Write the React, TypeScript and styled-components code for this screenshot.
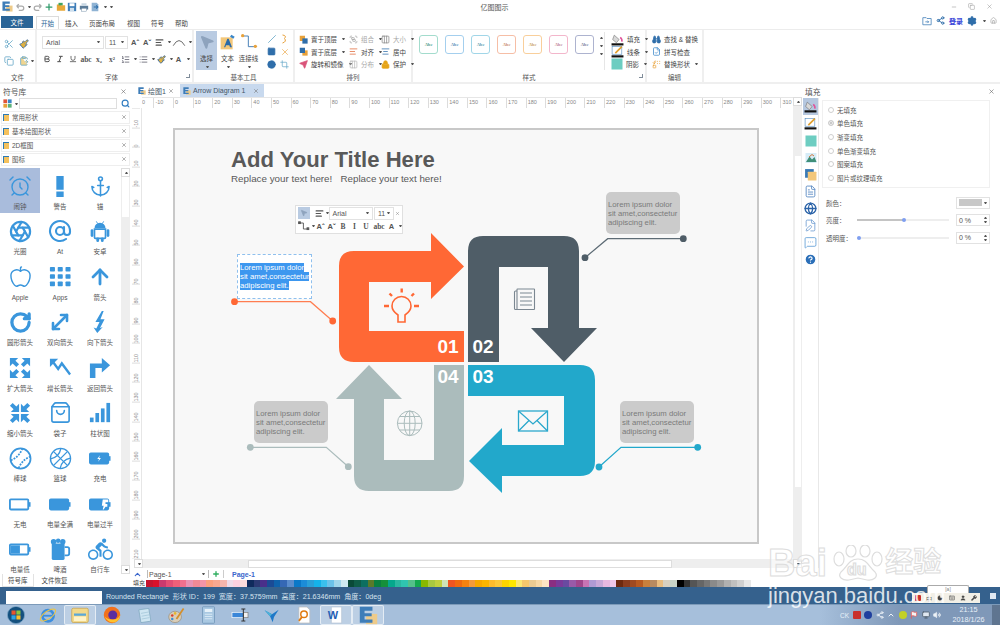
import React from 'react'
import styled, { createGlobalStyle } from 'styled-components'
import {
  AlarmClock, Anchor, Aperture, Apple, ArrowUp, AtSign, ChevronUp, ClipboardPaste, Copy, Crop, FileText,
  Paintbrush, MousePointer2, MoveDiagonal, Plus, RotateCw, Scissors, Search, Share2, Settings, ShoppingBag, X,
  Bold, Italic, Underline, AlignLeft, List, ListOrdered, Lock, Group, AlignCenter, Columns3, Minus, Send,
  HelpCircle, MessageSquareMore, FilePen, Globe, Copy as CopyIcon, Binoculars, FileCheck, Replace, Square, Circle, Home,
  Monitor, Volume2, Flag, Moon, Keyboard, User, Wrench
} from 'lucide-react'
import { MdDirectionsBike } from 'react-icons/md'

const FONT = '"Liberation Sans", "Noto Sans CJK SC", sans-serif'
const BLUE = '#3a96dc'

const GlobalStyle = createGlobalStyle`
  * { box-sizing: border-box; }
  html, body {
    margin: 0;
    width: 1000px;
    height: 625px;
    overflow: hidden;
    background: #fff;
    font-family: ${FONT};
    font-size: 6.5px;
    color: #444;
  }
  svg { display: block; flex-shrink: 0; }
`

const Shell = styled.div`
  position: relative;
  width: 1000px;
  height: 625px;
  display: flex;
  flex-direction: column;
  overflow: hidden;
`

const TitleBar = styled.div`
  height: 15px;
  flex-shrink: 0;
  display: grid;
  grid-template-columns: 1fr auto 1fr;
  align-items: center;
  padding: 0 5px 2px 2px;
`

const QuickAccess = styled.div`
  display: flex;
  align-items: center;
  gap: 1.5px;
`

const AppTitle = styled.div`
  font-size: 7px;
  color: #555;
  margin-right: 8px;
`

const WindowButtons = styled.div`
  display: flex;
  justify-content: flex-end;
  align-items: center;
  gap: 11px;
  padding-right: 2px;
  color: #888;
`

const TabRow = styled.div`
  height: 14px;
  flex-shrink: 0;
  display: flex;
  align-items: flex-end;
  padding-left: 1px;
`

const FileTab = styled.div`
  width: 32px;
  height: 12px;
  margin-bottom: 1px;
  background: #2a6496;
  color: #fff;
  display: flex;
  align-items: center;
  justify-content: center;
`

const RibbonTab = styled.div<{ $active?: boolean; $gap: number }>`
  margin-left: ${p => p.$gap}px;
  height: 13px;
  display: flex;
  align-items: center;
  padding: 0 4px;
  background: #fff;
  color: ${p => (p.$active ? '#2a6496' : '#444')};
  border: 1px solid ${p => (p.$active ? '#dcdcdc' : 'transparent')};
  border-bottom: none;
  white-space: nowrap;
`

const AccountTools = styled.div`
  flex: 1;
  height: 13px;
  display: flex;
  align-items: center;
  justify-content: flex-end;
  gap: 4px;
  padding-right: 3px;
  margin-bottom: 2px;
`

const LoginLink = styled.span`
  color: #3a46d8;
  font-weight: bold;
  font-size: 7px;
`

const Ribbon = styled.div`
  height: 55px;
  flex-shrink: 0;
  display: flex;
  border-top: 1px solid #ececec;
  border-bottom: 2px solid #efefef;
`

const RibbonGroup = styled.div<{ $width: number }>`
  width: ${p => p.$width}px;
  border-right: 2px solid #efefef;
  display: flex;
  flex-direction: column;
`

const GroupBody = styled.div`
  height: 41px;
  display: flex;
`

const GroupLabel = styled.div<{ $inset?: number }>`
  position: relative;
  flex: 1;
  display: flex;
  align-items: center;
  justify-content: center;
  padding-right: ${p => p.$inset ?? 0}px;
  color: #555;
`

const Launcher = styled.span`
  position: absolute;
  right: 2px;
  top: 3px;
  width: 4px;
  height: 4px;
  border: 1px solid #7f8c99;
  border-top-width: 0;
  border-left-width: 0;
`

const Caret = styled.span<{ $up?: boolean }>`
  display: inline-block;
  width: 3px;
  height: 2px;
  flex-shrink: 0;
  margin-left: 2px;
  border-left: 1.5px solid transparent;
  border-right: 1.5px solid transparent;
  ${p => (p.$up ? 'border-bottom: 2px solid #555;' : 'border-top: 2px solid #555;')}
`

const FileTools = styled.div`
  display: grid;
  grid-template-columns: 15px 17px;
  grid-auto-rows: 17px;
  padding: 5px 0 0 4px;
  align-items: center;
`

const InlineTool = styled.div`
  display: flex;
  align-items: center;
`

const FontTools = styled.div`
  display: flex;
  flex-direction: column;
  gap: 3px;
  padding: 5px 0 0 5px;
`

const FontRow = styled.div`
  height: 14px;
  display: flex;
  align-items: center;
`

const StyleRow = styled(FontRow)`
  margin-left: -1.5px;
`

const SelectBox = styled.div<{ $width: number }>`
  width: ${p => p.$width}px;
  height: 13px;
  border: 1px solid #e2e2e2;
  background: #fff;
  display: flex;
  align-items: center;
  justify-content: space-between;
  padding: 0 3px;
  margin-right: 1px;
  font-size: 7px;
  color: #555;
`

const GlyphButton = styled.span<{ $width?: number; $serif?: boolean }>`
  width: ${p => p.$width ?? 13}px;
  flex-shrink: 0;
  display: flex;
  align-items: center;
  justify-content: center;
  font-size: 7.5px;
  font-weight: bold;
  color: #555;
  white-space: nowrap;
  font-family: ${p => (p.$serif ? '"Liberation Serif", serif' : FONT)};
`

const BigTool = styled.div<{ $selected?: boolean; $width: number }>`
  width: ${p => p.$width}px;
  height: 39px;
  margin-top: 1px;
  padding-top: 3px;
  display: flex;
  flex-direction: column;
  align-items: center;
  white-space: nowrap;
  background: ${p => (p.$selected ? '#b9cbe2' : 'transparent')};
`

const BigLabel = styled.span`
  margin-top: 3px;
  margin-bottom: 3px;
`

const ShapeGrid = styled.div`
  display: grid;
  grid-template-columns: 13px 13px;
  grid-auto-rows: 12.5px;
  align-items: center;
  justify-items: center;
  padding: 3px 0 0 6px;
`

const ArrangeColumn = styled.div<{ $width: number }>`
  width: ${p => p.$width}px;
  flex-shrink: 0;
  display: flex;
  flex-direction: column;
  padding-top: 3px;
`

const ArrangeItem = styled.div<{ $muted?: boolean }>`
  height: 12.5px;
  display: flex;
  align-items: center;
  gap: 3px;
  white-space: nowrap;
  color: ${p => (p.$muted ? '#a8a8a8' : '#444')};
`

const StyleCards = styled.div`
  display: flex;
  gap: 7px;
  padding: 5px 0 0 6px;
`

const StyleCard = styled.div<{ $color: string; $text: string }>`
  width: 19px;
  height: 19px;
  border: 1.5px solid ${p => p.$color};
  border-radius: 3px;
  display: flex;
  align-items: center;
  justify-content: center;
  font-family: "Liberation Serif", serif;
  font-size: 4.5px;
  font-weight: bold;
  color: ${p => p.$text};
`

const StyleScroll = styled.div`
  width: 8px;
  margin-left: 3px;
  padding-top: 7px;
  display: flex;
  flex-direction: column;
  align-items: center;
  gap: 6px;
`

const StyleDivider = styled.div`
  width: 1px;
  height: 38px;
  margin: 2px 6px 0 1px;
  background: #e6e6e6;
`

const SymbolPanel = styled.div`
  width: 132px;
  display: flex;
  flex-direction: column;
`

const PanelHeader = styled.div`
  height: 14px;
  display: flex;
  align-items: center;
  justify-content: space-between;
  padding: 0 5px 0 3px;
  font-size: 7.8px;
  color: #555;
`

const SearchRow = styled.div`
  height: 11px;
  display: flex;
  align-items: center;
  padding-left: 3px;
  gap: 1px;
`

const SearchInput = styled.div`
  width: 98px;
  height: 11px;
  border: 1px solid #dedede;
  margin-right: 3px;
`

const SectionList = styled.div`
  padding-top: 1.5px;
  height: 59px;
  display: flex;
  flex-direction: column;
`

const SectionRow = styled.div`
  height: 13px;
  margin: 0 2px 1px 1px;
  border: 1px solid #eee;
  display: flex;
  align-items: center;
  gap: 3px;
  padding-left: 1px;
  color: #555;
`

const SectionClose = styled.span`
  margin-left: auto;
  margin-right: 2px;
`

const FolderMark = styled.span`
  width: 6px;
  height: 7px;
  background: #f4c15d;
  border-left: 1px solid #2d7ab5;
  border-top: 1px solid #2d7ab5;
`

const SymbolBody = styled.div`
  flex: 1;
  min-height: 0;
  display: flex;
  overflow: hidden;
`

const SymbolGrid = styled.div`
  width: 121px;
  display: grid;
  grid-template-columns: repeat(3, 40px);
  grid-auto-rows: 45.4px;
  align-content: start;
  overflow: hidden;
`

const SymbolCell = styled.div<{ $selected?: boolean }>`
  display: flex;
  flex-direction: column;
  align-items: center;
  padding-top: 6px;
  background: ${p => (p.$selected ? '#a9bcdc' : 'transparent')};
  color: ${BLUE};
`

const SymbolIcon = styled.div`
  height: 24px;
  display: flex;
  align-items: center;
`

const SymbolLabel = styled.span`
  margin-top: 5px;
  line-height: 8px;
  color: #555;
  white-space: nowrap;
`

const PanelScroll = styled.div`
  width: 9px;
  background: #eeeeee;
  display: flex;
  flex-direction: column;
  align-items: center;
`

const ScrollButton = styled.div<{ $down?: boolean }>`
  width: 9px;
  height: 9px;
  flex-shrink: 0;
  background: #fff;
  border: 1px solid #ddd;
  display: flex;
  align-items: center;
  justify-content: center;
  ${p => (p.$down ? 'margin-top: auto;' : '')}
`

const PanelThumb = styled.div`
  width: 7px;
  height: 40px;
  background: #fff;
`

const PanelTabs = styled.div`
  height: 13px;
  flex-shrink: 0;
  display: flex;
  align-items: stretch;
  padding-left: 2px;
`

const PanelTab = styled.div<{ $active?: boolean }>`
  display: flex;
  align-items: center;
  padding: 0 5px;
  margin-right: 2px;
  border: 1px solid ${p => (p.$active ? '#e2e2e2' : 'transparent')};
  border-top: none;
`

const Workspace = styled.div`
  height: 503px;
  flex-shrink: 0;
  display: flex;
`

const CenterArea = styled.div`
  flex: 1;
  display: flex;
  flex-direction: column;
`

const UpperArea = styled.div`
  height: 484px;
  display: flex;
`

const DocArea = styled.div`
  width: 670px;
  display: flex;
  flex-direction: column;
`

const DocTabs = styled.div`
  height: 13px;
  display: flex;
  align-items: stretch;
  padding-left: 3px;
`

const DocTab = styled.div<{ $active?: boolean }>`
  width: ${p => (p.$active ? 84 : 43)}px;
  margin-right: 2px;
  padding-left: 3px;
  display: flex;
  align-items: center;
  gap: 2px;
  white-space: nowrap;
  background: ${p => (p.$active ? '#c8d9ee' : '#fff')};
  font-size: 7px;
  color: #456;
`

const DocTabClose = styled.span`
  margin-left: auto;
  margin-right: 5px;
`

const DocBody = styled.div`
  flex: 1;
  display: flex;
  min-height: 0;
`

const MainColumn = styled.div`
  width: 661px;
  display: flex;
  flex-direction: column;
`

const RulerRow = styled.div`
  height: 11px;
  margin-left: 10px;
  display: flex;
  overflow: hidden;
  border-top: 1px solid #e6e6e6;
`

const RulerCell = styled.div`
  width: 19.6px;
  flex-shrink: 0;
  border-left: 1px solid #dcdcdc;
  padding-left: 1px;
  font-size: 5.5px;
  line-height: 8px;
  color: #888;
`

const RulerStart = styled(RulerCell)`
  width: 11.4px;
  border-left: none;
  padding-left: 0;
`

const CanvasRow = styled.div`
  height: 451px;
  display: flex;
`

const VerticalRuler = styled.div`
  width: 10px;
  overflow: hidden;
  border-right: 1px solid #e6e6e6;
`

const VRulerCell = styled.div`
  height: 19.6px;
  border-bottom: 1px solid #dcdcdc;
  writing-mode: vertical-rl;
  transform: rotate(180deg);
  font-size: 5.5px;
  line-height: 8px;
  color: #888;
  white-space: nowrap;
`

const Canvas = styled.div`
  flex: 1;
  padding: 20px 0 0 31px;
  background: #fff;
`

const DiagramPage = styled.div`
  position: relative;
  width: 586px;
  height: 416px;
  border: 2px solid #c8c8c8;
  background: #f8f8f8;
`

const DiagramSvg = styled.svg`
  position: absolute;
  left: 0;
  top: 0;
`

const SlideTitle = styled.div`
  position: absolute;
  left: 56px;
  top: 17px;
  font-size: 22.1px;
  line-height: 26px;
  font-weight: bold;
  color: #595959;
  white-space: nowrap;
`

const SlideSubtitle = styled.div`
  position: absolute;
  left: 56px;
  top: 43px;
  font-size: 9.8px;
  line-height: 12px;
  color: #595959;
  white-space: pre;
`

const Callout = styled.div<{ $x: number; $y: number }>`
  position: absolute;
  left: ${p => p.$x - 175}px;
  top: ${p => p.$y - 130}px;
  width: 74px;
  height: 42px;
  padding: 8px 0 0 2px;
  border-radius: 5px;
  background: #cbcbcb;
  font-size: 7.75px;
  line-height: 9px;
  color: #7a7a7a;
  white-space: pre;
`

const SelectedBox = styled.div`
  position: absolute;
  left: 62px;
  top: 124px;
  width: 75px;
  height: 45px;
  padding: 8px 0 0 2px;
  border: 1px dashed #8fc0ee;
  background: #fff;
  font-size: 7.75px;
  line-height: 9px;
  color: #fff;
  white-space: pre;
`

const SelectedLine = styled.span`
  background: #3d97ef;
`

const MiniToolbar = styled.div`
  position: absolute;
  left: 120px;
  top: 75px;
  width: 108px;
  height: 29px;
  background: #fff;
  border: 1px solid #e0e0e0;
  padding: 1px 2px;
  display: flex;
  flex-direction: column;
  gap: 1px;
`

const MiniRow = styled.div`
  height: 12.5px;
  display: flex;
  align-items: center;
`

const MiniPointer = styled.div`
  width: 12px;
  height: 12px;
  background: #b9cbe2;
  display: flex;
  align-items: center;
  justify-content: center;
  margin-right: 5px;
`

const VScroll = styled.div`
  width: 9px;
  background: #eeeeee;
  display: flex;
  flex-direction: column;
  align-items: center;
`

const VScrollThumb = styled.div`
  width: 6px;
  height: 331px;
  margin-top: 50px;
  background: #fff;
`

const HScroll = styled.div`
  height: 9px;
  margin-left: 2px;
  background: #eeeeee;
  display: flex;
  align-items: center;
`

const HScrollThumb = styled.div`
  width: 424px;
  height: 8px;
  margin-left: 105px;
  background: #fff;
  border: 1px solid #ddd;
`

const RightPanel = styled.div`
  width: 198px;
  display: flex;
  flex-direction: column;
`

const RightBody = styled.div`
  flex: 1;
  display: flex;
`

const ToolStrip = styled.div`
  width: 18px;
  margin-left: 1px;
  border-right: 1px solid #e8e8e8;
`

const StripItem = styled.div<{ $selected?: boolean }>`
  height: 17px;
  display: flex;
  align-items: center;
  justify-content: center;
  background: ${p => (p.$selected ? '#b5c7df' : 'transparent')};
`

const RightContent = styled.div`
  flex: 1;
  padding: 2px 10px 0 3px;
`

const FillOptions = styled.div`
  height: 88px;
  border: 1px solid #f0f0f0;
  padding: 2px 0 0 5px;
`

const FillOption = styled.div`
  height: 13.6px;
  display: flex;
  align-items: center;
  gap: 3px;
  color: #555;
`

const Radio = styled.span<{ $checked?: boolean }>`
  width: 6px;
  height: 6px;
  border-radius: 50%;
  border: 1px solid #cfcfcf;
  background: ${p => (p.$checked ? '#bbb' : '#fff')};
  box-shadow: ${p => (p.$checked ? 'inset 0 0 0 1px #f4f4f4' : 'none')};
`

const FormRows = styled.div`
  padding-top: 6px;
`

const FormRow = styled.div`
  height: 17.5px;
  display: grid;
  grid-template-columns: 31px 99px 34px;
  align-items: center;
  padding-left: 4px;
  color: #555;
  white-space: nowrap;
`

const Slider = styled.div`
  position: relative;
  width: 92px;
  height: 2px;
  background: #eee;
`

const SliderFill = styled.div<{ $value: number }>`
  width: ${p => p.$value}px;
  height: 2px;
  background: #c4c4c4;
`

const SliderThumb = styled.span<{ $value: number }>`
  position: absolute;
  left: ${p => p.$value - 2}px;
  top: -1px;
  width: 4px;
  height: 4px;
  border-radius: 50%;
  background: #7f9ff0;
`

const ValueBox = styled.div`
  height: 12px;
  border: 1px solid #e2e2e2;
  display: flex;
  align-items: center;
  justify-content: space-between;
  padding: 0 2px;
  font-size: 7px;
`

const Spinner = styled.span`
  display: flex;
  flex-direction: column;
  gap: 2px;
`

const ColorValue = styled.div`
  width: 24px;
  height: 7px;
  background: #c8c8c8;
`

const PageBar = styled.div`
  height: 12px;
  display: flex;
  align-items: center;
  padding-left: 1px;
  font-size: 7px;
  background: #fff;
`

const PageSelect = styled.div`
  width: 62px;
  height: 8px;
  margin-left: 5px;
  padding: 0 3px 0 1px;
  border-left: 1px solid #bbb;
  border-right: 1px solid #bbb;
  display: flex;
  align-items: center;
  justify-content: space-between;
  color: #555;
`

const AddPage = styled.div`
  width: 15px;
  display: flex;
  justify-content: center;
  border-right: 1px solid #ccc;
  margin-right: 8px;
`

const ActivePage = styled.span`
  color: #3a66cc;
  font-weight: bold;
`

const ColorBar = styled.div`
  height: 7px;
  display: flex;
  align-items: center;
`

const ColorLabel = styled.span`
  width: 14px;
  padding-left: 1px;
  font-size: 6px;
  line-height: 7px;
  white-space: nowrap;
  flex-shrink: 0;
`

const Swatch = styled.span<{ $color: string }>`
  width: 6.72px;
  height: 7px;
  flex-shrink: 0;
  background: ${p => p.$color};
`

const StatusBar = styled.div`
  height: 17px;
  flex-shrink: 0;
  background: #35618d;
  display: flex;
  align-items: flex-end;
  padding-left: 6px;
  color: #d5e3ef;
  font-size: 7.1px;
`

const StatusInput = styled.div`
  width: 96px;
  height: 13px;
  background: #fff;
`

const StatusText = styled.div`
  height: 17px;
  display: flex;
  align-items: center;
  margin-left: 4px;
  white-space: pre;
`

const LangBarStack = styled.div`
  position: absolute;
  left: 912px;
  top: 585px;
  display: flex;
  flex-direction: column;
  align-items: flex-end;
  width: 68px;
`

const LangTip = styled.div`
  width: 42px;
  height: 8px;
  margin-right: 11px;
  background: #fff;
  border: 1px solid #aaa;
  border-bottom: none;
  border-radius: 2px 2px 0 0;
  font-size: 5px;
  line-height: 7px;
  text-align: center;
  color: #888;
`

const LangBar = styled.div`
  width: 68px;
  height: 10px;
  background: #f2efe6;
  display: flex;
  align-items: center;
  justify-content: space-around;
  font-size: 6px;
  color: #555;
`

const LangIcon = styled.span`
  width: 6px;
  height: 6px;
  border-radius: 1px;
  background: #c9302c;
`

const StatusGrid = styled.div`
  position: absolute;
  left: 990px;
  top: 593px;
  width: 6px;
  height: 6px;
  background: #dfe8f1;
`

const Taskbar = styled.div`
  height: 21px;
  flex-shrink: 0;
  display: flex;
  align-items: stretch;
  background: linear-gradient(90deg, #a6bfdb 0, #a6bfdb 82%, #7f98b8 90%, #7f98b8 100%);
  border-top: 1px solid #7c9ab9;
`

const TaskItem = styled.div<{ $active?: boolean }>`
  width: 32px;
  display: flex;
  align-items: center;
  justify-content: center;
  ${p => (p.$active ? 'background: rgba(255,255,255,.25); border: 1px solid rgba(255,255,255,.6); border-radius: 2px;' : '')}
`

const Tray = styled.div`
  margin-left: auto;
  display: flex;
  align-items: center;
  gap: 3.5px;
  color: #eaf1f8;
  font-size: 6.5px;
`

const TrayDot = styled.span<{ $color: string; $round?: boolean }>`
  width: 8px;
  height: 8px;
  background: ${p => p.$color};
  border-radius: ${p => (p.$round ? '50%' : '1px')};
`

const Clock = styled.div`
  width: 40px;
  margin-left: 4px;
  text-align: center;
  font-size: 7.2px;
  line-height: 10px;
`

const ShowDesktop = styled.div`
  width: 8px;
  align-self: stretch;
  background: #5f7590;
`

const Watermark = styled.div`
  position: absolute;
  left: 768px;
  top: 545px;
  width: 190px;
  pointer-events: none;
`

const MarkRow = styled.div`
  display: flex;
  align-items: center;
  height: 36px;
`

const MarkText = styled.span<{ $size: number }>`
  font-size: ${p => p.$size}px;
  font-weight: bold;
  color: rgba(255, 255, 255, .55);
  -webkit-text-stroke: 1px #dddddd;
  line-height: 36px;
  white-space: nowrap;
`

const MarkUrl = styled.div`
  margin-top: 2px;
  font-size: 22px;
  line-height: 26px;
  color: rgba(255, 255, 255, .82);
  white-space: nowrap;
`

const Close = ({ size = 7 }: { size?: number }) => <X size={size} color="#666" strokeWidth={2} />

function EdrawLogo({ size }: { size: number }) {
  return (
    <svg width={size} height={size} viewBox="0 0 24 24">
      <rect x="9" y="10" width="14" height="13" fill="#eecb8a" />
      <path d="M1 1h16v5H7v3h9v4H7v4h10v4H1z" fill="#3e7db8" />
    </svg>
  )
}

function Battery({ level, bolt, notch }: { level: number; bolt?: boolean; notch?: boolean }) {
  return (
    <svg width="22" height="22" viewBox="0 0 24 24" fill="currentColor">
      <rect x="1" y="7" width="20" height="11" rx="1" fill={level === 1 ? 'currentColor' : '#fff'} stroke="currentColor" strokeWidth="2" />
      <rect x="21" y="10" width="2.5" height="5" />
      {level > 0 && level < 1 && <rect x="2" y="8" width={18 * level} height="9" />}
      {bolt && <path d="M12 9l-3 4h2l-1 3 3-4h-2z" fill="#fff" />}
      {notch && <path d="M15 7h6v3h-3v2h2v3h-2l-2 3h-1l1-4h-2z" fill="#fff" />}
    </svg>
  )
}

const ExpandArrow = 'M1 1h9L7 4l4 4-3 3-4-4-3 3z'
const CompressArrow = 'M11 11H2l3-3-4-4 3-3 4 4 3-3z'

function FourArrows({ d }: { d: string }) {
  return (
    <svg width="22" height="22" viewBox="0 0 24 24" fill="currentColor">
      {[0, 90, 180, 270].map(r => <path key={r} d={d} transform={`rotate(${r} 12 12)`} />)}
    </svg>
  )
}

const solid = (children: React.ReactNode, size = 22) => (
  <svg width={size} height={size} viewBox="0 0 24 24" fill="currentColor">{children}</svg>
)

const SYMBOLS: { label: string; icon: React.ReactNode }[] = [
  { label: '闹钟', icon: <AlarmClock size={24} strokeWidth={1.4} /> },
  { label: '警告', icon: solid(<path d="M8 1h8v15H8zM8 18h8v6H8z" />) },
  { label: '锚', icon: <Anchor size={23} strokeWidth={1.6} /> },
  { label: '光圈', icon: <Aperture size={23} strokeWidth={2.3} /> },
  { label: 'At', icon: <AtSign size={24} strokeWidth={2.1} /> },
  {
    label: '安卓',
    icon: solid(
      <>
        <path d="M6 9a6 6 0 0 1 12 0z" />
        <path d="M8 1.500l1.500 2.500M16 1.500L14.500 4" stroke="currentColor" strokeWidth="1" />
        <path d="M6 10h12v9a1 1 0 0 1-1 1H7a1 1 0 0 1-1-1z" fill="none" stroke="currentColor" strokeWidth="1.800" />
        <rect x="1.800" y="10" width="3" height="8.500" rx="1.500" />
        <rect x="19.200" y="10" width="3" height="8.500" rx="1.500" />
        <rect x="8" y="19" width="3" height="5" rx="1.500" />
        <rect x="13" y="19" width="3" height="5" rx="1.500" />
      </>
    )
  },
  { label: 'Apple', icon: <Apple size={23} strokeWidth={1.5} /> },
  {
    label: 'Apps',
    icon: solid([2, 10, 18].flatMap(y => [1, 9.5, 18].map(x => <rect key={`${x}-${y}`} x={x} y={y - 1} width="5.5" height="5" rx=".8" />)))
  },
  { label: '箭头', icon: <ArrowUp size={24} strokeWidth={2.8} /> },
  { label: '圆形箭头', icon: <RotateCw size={23} strokeWidth={3.4} /> },
  { label: '双向箭头', icon: <MoveDiagonal size={24} strokeWidth={2.6} /> },
  { label: '向下箭头', icon: solid(<path d="M14 0L7 12h4.5L8 19l-3-1 4 6 6-6.5-3 1L17 9h-4.5L16 0z" />) },
  { label: '扩大箭头', icon: <FourArrows d={ExpandArrow} /> },
  {
    label: '增长箭头',
    icon: solid(<><path d="M1 2h9L1 11z" /><path d="M4 5l6 8 4-6 9 12" fill="none" stroke="currentColor" strokeWidth="2.6" /></>)
  },
  { label: '返回箭头', icon: solid(<path d="M1 23V7h13V1l9 8-9 8v-5H7v11z" />) },
  { label: '缩小箭头', icon: <FourArrows d={CompressArrow} /> },
  { label: '袋子', icon: <ShoppingBag size={23} strokeWidth={1.7} /> },
  { label: '柱状图', icon: solid(<><rect x="1" y="17" width="4" height="5" /><rect x="7" y="12" width="4" height="10" /><rect x="13" y="7" width="4" height="15" /><rect x="19" y="1" width="4" height="21" /></>) },
  {
    label: '棒球',
    icon: (
      <svg width="23" height="23" viewBox="0 0 24 24" fill="none" stroke="currentColor" strokeWidth="1.8">
        <circle cx="12" cy="12" r="10.5" />
        <g transform="rotate(45 12 12)" strokeDasharray="2 1.2">
          <path d="M6 3Q10 12 6 21" />
          <path d="M18 3Q14 12 18 21" />
        </g>
      </svg>
    )
  },
  {
    label: '篮球',
    icon: (
      <svg width="23" height="23" viewBox="0 0 24 24" fill="none" stroke="currentColor" strokeWidth="1.4">
        <circle cx="12" cy="12" r="10.5" />
        <g transform="rotate(45 12 12)">
          <path d="M12 1.5v21M1.5 12h21M5 4.500Q10 12 5 19.500M19 4.500Q14 12 19 19.500" />
        </g>
      </svg>
    )
  },
  { label: '充电', icon: <Battery level={1} bolt /> },
  { label: '无电', icon: <Battery level={0} /> },
  { label: '电量全满', icon: <Battery level={1} /> },
  { label: '电量过半', icon: <Battery level={1} notch /> },
  { label: '电量低', icon: <Battery level={0.55} /> },
  {
    label: '啤酒',
    icon: solid(
      <>
        <circle cx="5" cy="4" r="3" /><circle cx="10" cy="3" r="2.5" /><circle cx="15" cy="4" r="3" />
        <path d="M3 6h14v16a2 2 0 0 1-2 2H5a2 2 0 0 1-2-2z" />
        <path d="M17 10h3a2 2 0 0 1 2 2v5a2 2 0 0 1-2 2h-3" fill="none" stroke="currentColor" strokeWidth="2" />
      </>
    )
  },
  { label: '自行车', icon: <MdDirectionsBike size={25} /> },
]

const TICKS_X = Array.from({ length: 33 }, (_, i) => -10 + i * 10)
const TICKS_Y = Array.from({ length: 24 }, (_, i) => -10 + i * 10)

const PALETTE = [
  '#c5142f', '#d8112c', '#c93a6e', '#e14e75', '#ee6079', '#f0708f', '#e893b5', '#f08a96', '#f495a8', '#fba07e', '#f8a890', '#f6b6ad', '#eedbe9', '#fbd0e0', '#fbdcdc',
  '#0f2b5c', '#2b3a73', '#4a2f8a', '#1b4b95', '#0f62ab', '#3568b5', '#5a8ccc', '#0a78c8', '#1b8cd8', '#2a9fd8', '#15b2ea', '#3ac0ee', '#6bc2ea', '#a0d6ec', '#cfeaf2',
  '#0a4a38', '#0f5d48', '#0d6f60', '#5a7a2a', '#0a8040', '#15903a', '#05a88c', '#2ab8a0', '#2fc4b0', '#55c08a', '#14a850', '#88b800', '#a8c840', '#c0d040', '#cfe4b8',
  '#ef5522', '#f06a10', '#f5820f', '#f59a3a', '#f8a800', '#fbb500', '#fdbb2d', '#fcc83a', '#ffd500', '#fde800', '#fbe874', '#f6c86c', '#ebcb92', '#f6d8a6', '#fce4c4',
  '#8a2e82', '#7a3a9a', '#6a4aa0', '#9a5aa8', '#a0468c', '#c874b4', '#b09ad4', '#c8a8d8', '#e8b8e0', '#f0c8e8',
  '#6e2a10', '#8a3d20', '#a04a20', '#b85a20', '#c8803c', '#b88a60', '#e8bc80', '#d8d0c0', '#c8d4c8',
  '#000000', '#333333', '#555555', '#666666', '#777777', '#8a8a8a', '#999999', '#b0b0b0', '#c0c0c0', '#d0d0d0', '#e8e8e8',
]

const STYLE_CARDS = [
  { color: '#a3dccd', text: '#4f9c8a' },
  { color: '#a4cfee', text: '#5b90b8' },
  { color: '#a1d6e8', text: '#5a9cb0' },
  { color: '#f6bea6', text: '#c98a6c' },
  { color: '#f9cf9b', text: '#c9a066' },
  { color: '#f3b6cb', text: '#c07f96' },
  { color: '#adb3cf', text: '#7a809c' },
]

const LOREM = 'Lorem ipsum dolor\nsit amet,consectetur\nadipiscing elit.'

const Dot = ({ x, y, c }: { x: number; y: number; c: string }) => <circle cx={x} cy={y} r="3.4" fill={c} />

function Diagram() {
  return (
    <DiagramSvg width="582" height="412" viewBox="175 130 582 412">
      <path d="M464 331H369V282H431V299L464 266.500L431 233V251H354Q339 251 339 266V347Q339 362 354 362H464Z" fill="#ff6835" />
      <path d="M468 362V251Q468 236 483 236H564Q579 236 579 251V328H597L564 362L531 328H548V267H499V362Z" fill="#4f5d67" />
      <path d="M468 365H580Q595 365 595 380V461Q595 476 580 476H502V493L469 461L502 428V445H564V396H468Z" fill="#22a8cb" />
      <path d="M434 365H464V476Q464 491 449 491H369Q354 491 354 476V399H336L369 365L402 399H384V460H434Z" fill="#abbcbc" />

      <g fontFamily={FONT} fontSize="19" fontWeight="bold" fill="#fff">
        <text x="437.500" y="353">01</text>
        <text x="472.500" y="353">02</text>
        <text x="472.500" y="383">03</text>
        <text x="437.500" y="383">04</text>
      </g>

      <path d="M235 301.700H310.500L332.700 321" fill="none" stroke="#ff7d50" strokeWidth="1.2" />
      <Dot x={234.500} y={301.700} c="#ff6835" />
      <Dot x={332.700} y={321} c="#ff6835" />
      <path d="M683 238.700H607.700L585 257.700" fill="none" stroke="#5d6b75" strokeWidth="1.2" />
      <Dot x={683.300} y={238.700} c="#4f5d67" />
      <Dot x={585} y={257.700} c="#4f5d67" />
      <path d="M250 447.300H326.300L348.300 466.700" fill="none" stroke="#abbcbc" strokeWidth="1.2" />
      <Dot x={250.300} y={447.300} c="#abbcbc" />
      <Dot x={348.300} y={466.700} c="#abbcbc" />
      <path d="M698 447.300H621L599 467" fill="none" stroke="#22a8cb" strokeWidth="1.2" />
      <Dot x={697.700} y={447.300} c="#22a8cb" />
      <Dot x={599} y={467} c="#22a8cb" />

      <g fill="none" stroke="#ff6835" strokeWidth="1.6">
        <path d="M398 322V315Q392 311 392 306A9.500 9.500 0 0 1 411 306Q411 311 405 315V322Z" />
      </g>
      <g fill="none" stroke="#ff6835" strokeWidth="2.400">
        <path d="M401.700 288.500V292.500M384 306H389M414 306H419M389.500 293.500L392 296M414 293.500L411.500 296" />
      </g>

      <g fill="#f8f8f8" stroke="#7b8791" strokeWidth="1.100">
        <rect x="514.500" y="291" width="17" height="18.500" rx="1" />
        <rect x="517" y="289" width="17.500" height="20.500" rx=".5" />
        <path d="M520 293H532M520 297H532M520 301H532M520 305H532" />
      </g>

      <g fill="none" stroke="#2ba8cc" strokeWidth="1.300">
        <rect x="518.500" y="411" width="29" height="20" />
        <path d="M518.500 411L533 424L547.500 411M518.500 431L529 420.500M547.500 431L537 420.500" />
      </g>

      <g fill="none" stroke="#abbcbc" strokeWidth="1">
        <circle cx="409.700" cy="423.300" r="12.300" />
        <ellipse cx="409.700" cy="423.300" rx="5.500" ry="12.300" />
        <path d="M409.700 411V435.600M397.400 423.300H422M399.500 416.500H420M399.500 430H420" />
      </g>
    </DiagramSvg>
  )
}

function FloatingToolbar() {
  return (
    <MiniToolbar>
      <MiniRow>
        <MiniPointer><MousePointer2 size={8} color="#8ea3bd" fill="#8ea3bd" /></MiniPointer>
        <AlignLeft size={9} color="#555" strokeWidth={3} /><Caret />
        <SelectBox $width={46}>Arial<Caret /></SelectBox>
        <SelectBox $width={20}>11<Caret /></SelectBox>
        <X size={5} color="#777" />
      </MiniRow>
      <MiniRow>
        <svg width="12" height="10" viewBox="0 0 20 16" fill="none" stroke="#555" strokeWidth="1.500"><path d="M3 3H9V13H16" /><rect x="1" y="1" width="3" height="3" fill="#555" /><rect x="15" y="11" width="3" height="3" fill="#555" /></svg>
        <Caret />
        <GlyphButton $width={11}>Aˆ</GlyphButton>
        <GlyphButton $width={11}>Aˇ</GlyphButton>
        <GlyphButton $width={12} $serif>B</GlyphButton>
        <GlyphButton $width={11} $serif>I</GlyphButton>
        <GlyphButton $width={12} $serif>U</GlyphButton>
        <GlyphButton $width={14} $serif>abc</GlyphButton>
        <GlyphButton $width={11}>A</GlyphButton><Caret />
      </MiniRow>
    </MiniToolbar>
  )
}

function Orb() {
  return (
    <svg width="18" height="18" viewBox="0 0 24 24">
      <circle cx="12" cy="12" r="11.500" fill="#14507e" stroke="#7fa7c8" />
      <rect x="6" y="6" width="5.500" height="5.500" fill="#e9552d" />
      <rect x="12.500" y="6" width="5.500" height="5.500" fill="#8cc63f" />
      <rect x="6" y="12.500" width="5.500" height="5.500" fill="#2ea3e6" />
      <rect x="12.500" y="12.500" width="5.500" height="5.500" fill="#fbc02d" />
    </svg>
  )
}

const TASK_ICONS: React.ReactNode[] = [
  <Orb key="orb" />,
  <svg key="ie" width="18" height="18" viewBox="0 0 24 24" fill="none">
    <circle cx="12" cy="13" r="7.500" stroke="#3c8ee0" strokeWidth="3.500" />
    <path d="M4 13H20" stroke="#3c8ee0" strokeWidth="2.500" />
    <ellipse cx="12" cy="12" rx="12" ry="5" transform="rotate(-35 12 12)" stroke="#f0c53c" strokeWidth="1.300" />
  </svg>,
  <svg key="explorer" width="20" height="18" viewBox="0 0 26 24">
    <rect x="2" y="3" width="22" height="19" rx="2" fill="#f2d98a" stroke="#c7a24e" />
    <rect x="5" y="10" width="16" height="3" fill="#5aa8d8" />
    <rect x="5" y="14" width="16" height="6" fill="#fff3c8" />
  </svg>,
  <svg key="firefox" width="18" height="18" viewBox="0 0 24 24">
    <circle cx="12" cy="12" r="11" fill="#f2711c" />
    <circle cx="13" cy="12" r="6" fill="#5b2da0" />
    <path d="M2 14Q6 22 14 22Q22 21 23 12Q19 19 12 18Q6 18 2 14Z" fill="#ffc22e" />
  </svg>,
  <svg key="note" width="17" height="17" viewBox="0 0 24 24">
    <path d="M4 4L18 2L21 20L7 22Z" fill="#cfe6f2" stroke="#7da6bd" />
    <path d="M7 9L18 7M8 13L19 11M8 17L19 15" stroke="#9fc3d6" />
  </svg>,
  <svg key="paint" width="17" height="17" viewBox="0 0 24 24">
    <ellipse cx="10" cy="14" rx="9" ry="8" fill="#d9cdb8" stroke="#9c8f78" />
    <circle cx="6" cy="12" r="1.800" fill="#d9402e" /><circle cx="10" cy="9" r="1.800" fill="#e8b62c" /><circle cx="6" cy="17" r="1.800" fill="#3b8ed8" />
    <path d="M12 17L22 2" stroke="#d58f2b" strokeWidth="2.500" />
  </svg>,
  <svg key="calc" width="15" height="18" viewBox="0 0 20 24">
    <rect x="2" y="1" width="16" height="22" rx="1" fill="#a9c8e2" stroke="#6d93b5" />
    <rect x="5" y="4" width="10" height="4" fill="#e6f1f9" />
    <path d="M5 11h10M5 14h10M5 17h10" stroke="#e6f1f9" />
  </svg>,
  <svg key="rename" width="18" height="16" viewBox="0 0 26 24">
    <rect x="1" y="8" width="17" height="8" fill="#3a86d8" stroke="#fff" />
    <rect x="18" y="8" width="7" height="8" fill="#f2f2f2" stroke="#777" />
    <path d="M15 3h6M18 3V21M15 21h6" stroke="#333" strokeWidth="1.500" fill="none" />
  </svg>,
  <svg key="bird" width="18" height="16" viewBox="0 0 24 24">
    <path d="M1 5L12 11L22 4L15 15L13 23L9 14Z" fill="#1e78c8" />
    <path d="M1 5L9 14L12 11Z" fill="#4db4d8" />
  </svg>,
  <svg key="find" width="16" height="18" viewBox="0 0 22 24">
    <path d="M4 1h11l4 4v18H4z" fill="#fff" stroke="#bbb" />
    <circle cx="11" cy="11" r="4.500" fill="#fff" stroke="#e07b12" strokeWidth="2" />
    <path d="M8 15L4 20" stroke="#e07b12" strokeWidth="2.500" />
  </svg>,
  <svg key="word" width="19" height="18" viewBox="0 0 26 24">
    <path d="M6 1h14v22H6z" fill="#fff" stroke="#b9c7d6" />
    <text x="1" y="17" fontFamily={FONT} fontSize="15" fontWeight="bold" fill="#1f5fb4">W</text>
  </svg>,
  <EdrawLogo key="edraw" size={19} />,
]

const STRIP_ICONS: React.ReactNode[] = [
  <svg key="fill" width="13" height="13" viewBox="0 0 24 24"><path d="M6 4l9 8-5 6-7-6z" fill="#d8d8d8" stroke="#666" /><path d="M17 8q4 3 3 8" stroke="#e0559a" strokeWidth="3" fill="none" /><rect x="1" y="19" width="22" height="4" fill="#111" /></svg>,
  <svg key="line" width="13" height="13" viewBox="0 0 24 24"><rect x="2" y="3" width="18" height="14" fill="#fff" stroke="#3a7ab5" /><path d="M8 15L20 3" stroke="#e0a030" strokeWidth="3" /><rect x="1" y="19" width="22" height="4" fill="#111" /></svg>,
  <svg key="shadow" width="12" height="12" viewBox="0 0 24 24"><rect x="1" y="1" width="22" height="22" fill="#6dcdc1" /></svg>,
  <svg key="image" width="12" height="12" viewBox="0 0 24 24"><rect x="1" y="2" width="22" height="20" fill="#d6ecf7" /><path d="M2 20L9 9L14 15L19 10L23 20Z" fill="#3f8f78" /><path d="M8 10L14 5L18 8" stroke="#d07a40" strokeWidth="2" fill="none" /></svg>,
  <svg key="layers" width="13" height="13" viewBox="0 0 24 24"><rect x="2" y="2" width="16" height="16" fill="#3a7ab5" /><rect x="7" y="7" width="16" height="16" rx="1" fill="#f3c77a" /></svg>,
  <FileText key="doc" size={13} color="#5d8cc4" strokeWidth={1.700} />,
  <Globe key="globe" size={13} color="#2b63a8" strokeWidth={2.400} />,
  <FilePen key="pen" size={13} color="#6b9ad0" strokeWidth={1.500} />,
  <MessageSquareMore key="chat" size={13} color="#5b9bd5" strokeWidth={1.500} />,
  <HelpCircle key="help" size={13} color="#fff" fill="#2b6fb8" strokeWidth={2.200} />,
]

const FILL_OPTIONS = ['无填充', '单色填充', '渐变填充', '单色渐变填充', '图案填充', '图片或纹理填充']

export default function App() {
  return (
    <Shell>
      <GlobalStyle />

      <TitleBar>
        <QuickAccess>
          <EdrawLogo size={11} />
          <svg width="10" height="10" viewBox="0 0 24 24" fill="none" stroke="#aaa" strokeWidth="3"><path d="M4 10h12a5 5 0 0 1 0 10H9M4 10l5-5M4 10l5 5" /></svg>
          <Caret />
          <svg width="10" height="10" viewBox="0 0 24 24" fill="none" stroke="#aaa" strokeWidth="3"><path d="M20 10H8a5 5 0 0 0 0 10h7M20 10l-5-5M20 10l-5 5" /></svg>
          <Plus size={10} color="#2f9a6a" strokeWidth={3} />
          <svg width="10" height="10" viewBox="0 0 24 24"><path d="M2 6h8l2 2h10v13H2z" fill="#e8a93a" /><path d="M6 2h10v6H6z" fill="#3fa35f" /></svg>
          <svg width="10" height="10" viewBox="0 0 24 24"><rect x="2" y="2" width="20" height="20" fill="#3e7db8" /><rect x="6" y="3" width="12" height="7" fill="#fff" /><rect x="7" y="14" width="10" height="8" fill="#cfe0ee" /></svg>
          <svg width="10" height="10" viewBox="0 0 24 24"><rect x="2" y="9" width="20" height="9" fill="#5b7b98" /><rect x="6" y="3" width="12" height="6" fill="#c9d8e4" /><rect x="6" y="15" width="12" height="7" fill="#fff" stroke="#5b7b98" /></svg>
          <svg width="10" height="10" viewBox="0 0 24 24"><path d="M4 2h12l4 4v16H4z" fill="#8fb3d4" /><path d="M9 12h10M15 8l4 4-4 4" stroke="#2f6eaa" strokeWidth="2.500" fill="none" /></svg>
          <Caret />
          <Caret />
        </QuickAccess>
        <AppTitle>亿图图示</AppTitle>
        <WindowButtons>
          <Minus size={6} strokeWidth={2} />
          <CopyIcon size={7} strokeWidth={1.500} />
          <X size={7} strokeWidth={1.500} />
        </WindowButtons>
      </TitleBar>

      <TabRow>
        <FileTab>文件</FileTab>
        <RibbonTab $active $gap={3}>开始</RibbonTab>
        <RibbonTab $gap={1}>插入</RibbonTab>
        <RibbonTab $gap={1}>页面布局</RibbonTab>
        <RibbonTab $gap={2}>视图</RibbonTab>
        <RibbonTab $gap={1}>符号</RibbonTab>
        <RibbonTab $gap={1}>帮助</RibbonTab>
        <AccountTools>
          <svg width="10" height="10" viewBox="0 0 24 24" fill="none" stroke="#4d87bd" strokeWidth="2"><path d="M2 4h8l2 2h10v15H2z" /><path d="M8 14h8M13 11l3 3-3 3" /></svg>
          <Share2 size={9} color="#2f6eaa" strokeWidth={2.500} />
          <LoginLink>登录</LoginLink>
          <Settings size={10} color="#2f6eaa" fill="#2f6eaa" strokeWidth={2.500} />
          <Caret />
          <Home size={7} color="#999" />
        </AccountTools>
      </TabRow>

      <Ribbon>
        <RibbonGroup $width={37}>
          <GroupBody>
            <FileTools>
              <Scissors size={10} color="#6aa9c9" />
              <Paintbrush size={10} color="#3a6fb0" fill="#e3b23c" />
              <Copy size={10} color="#6aa9c9" />
              <InlineTool><ClipboardPaste size={10} color="#6aa9c9" fill="#f0d590" /><Caret /></InlineTool>
            </FileTools>
          </GroupBody>
          <GroupLabel>文件</GroupLabel>
        </RibbonGroup>

        <RibbonGroup $width={157}>
          <GroupBody>
            <FontTools>
              <FontRow>
                <SelectBox $width={62}>Arial<Caret /></SelectBox>
                <SelectBox $width={23}>11<Caret /></SelectBox>
                <GlyphButton $width={12}>Aˆ</GlyphButton>
                <GlyphButton $width={12}>Aˇ</GlyphButton>
                <GlyphButton><AlignLeft size={9} color="#555" strokeWidth={3} /></GlyphButton><Caret />
                <svg width="16" height="9" viewBox="0 0 24 14" fill="none" stroke="#666" strokeWidth="1.500"><path d="M3 12Q12 -4 21 12" /></svg>
                <Caret />
              </FontRow>
              <StyleRow>
                <GlyphButton><Bold size={8} color="#555" strokeWidth={3} /></GlyphButton>
                <GlyphButton><Italic size={8} color="#555" strokeWidth={3} /></GlyphButton>
                <GlyphButton><Underline size={8} color="#555" strokeWidth={2.500} /></GlyphButton>
                <GlyphButton $serif>abc</GlyphButton>
                <GlyphButton $serif>x₂</GlyphButton>
                <GlyphButton $serif>x²</GlyphButton>
                <GlyphButton><ListOrdered size={9} color="#556" strokeWidth={2} /></GlyphButton><Caret />
                <GlyphButton><List size={9} color="#556" strokeWidth={2} /></GlyphButton><Caret />
                <GlyphButton><Paintbrush size={9} color="#2a5f9e" fill="#e3b23c" /></GlyphButton><Caret />
                <GlyphButton $width={12}>A</GlyphButton><Caret />
              </StyleRow>
            </FontTools>
          </GroupBody>
          <GroupLabel $inset={6}>字体<Launcher /></GroupLabel>
        </RibbonGroup>

        <RibbonGroup $width={101}>
          <GroupBody>
            <GlyphButton $width={2} />
            <BigTool $selected $width={21}>
              <MousePointer2 size={16} color="#8ea3bd" fill="#8ea3bd" />
              <BigLabel>选择</BigLabel>
              <Caret />
            </BigTool>
            <BigTool $width={21}>
              <svg width="16" height="16" viewBox="0 0 24 24"><rect x="1" y="5" width="18" height="18" fill="#f3c77a" /><path d="M6 20L11 7h2l5 13h-3l-1-3H9l-1 3z" fill="#2b6aa8" /><path d="M17 1l5 3-2 3-5-3z" fill="#3a86c8" /></svg>
              <BigLabel>文本</BigLabel>
              <Caret />
            </BigTool>
            <BigTool $width={21}>
              <svg width="18" height="16" viewBox="0 0 26 24" fill="none"><path d="M4 3H12V19H22" stroke="#4b82b8" strokeWidth="1.500" /><rect x="1" y="0" width="5" height="5" rx="2.500" fill="#e8a13a" /><rect x="20" y="16" width="5" height="5" rx="2.500" fill="#e8a13a" /></svg>
              <BigLabel>连接线</BigLabel>
              <Caret />
            </BigTool>
            <ShapeGrid>
              <svg width="10" height="10" viewBox="0 0 24 24" stroke="#6aa9c9" strokeWidth="2"><path d="M3 21L21 3" /></svg>
              <svg width="9" height="10" viewBox="0 0 16 20" fill="none" stroke="#e8a13a" strokeWidth="2"><path d="M4 2Q13 3 8 9Q13 15 4 18" /></svg>
              <Square size={9} color="#2f6eaa" fill="#2f6eaa" />
              <X size={10} color="#e8a13a" strokeWidth={1.500} />
              <Circle size={9} color="#2f6eaa" fill="#2f6eaa" />
              <Crop size={9} color="#6aa9c9" />
            </ShapeGrid>
          </GroupBody>
          <GroupLabel>基本工具</GroupLabel>
        </RibbonGroup>

        <RibbonGroup $width={118}>
          <GroupBody>
            <GlyphButton $width={4} />
            <ArrangeColumn $width={50}>
              <ArrangeItem><svg width="9" height="9" viewBox="0 0 24 24"><rect x="2" y="2" width="14" height="14" fill="#e8a13a" /><rect x="9" y="9" width="14" height="14" fill="#2f6eaa" /></svg>置于顶层<Caret /></ArrangeItem>
              <ArrangeItem><svg width="9" height="9" viewBox="0 0 24 24"><rect x="9" y="9" width="14" height="14" fill="#e8a13a" /><rect x="2" y="2" width="14" height="14" fill="#2f6eaa" /></svg>置于底层<Caret /></ArrangeItem>
              <ArrangeItem><Send size={9} color="#d9547a" fill="#d9547a" />旋转和镜像<Caret /></ArrangeItem>
            </ArrangeColumn>
            <ArrangeColumn $width={32}>
              <ArrangeItem $muted><Group size={9} color="#aaa" />组合<Caret /></ArrangeItem>
              <ArrangeItem><AlignLeft size={9} color="#e06a3a" />对齐<Caret /></ArrangeItem>
              <ArrangeItem $muted><Columns3 size={9} color="#bbb" />分布<Caret /></ArrangeItem>
            </ArrangeColumn>
            <ArrangeColumn $width={30}>
              <ArrangeItem $muted><Columns3 size={9} color="#888" />大小<Caret /></ArrangeItem>
              <ArrangeItem><AlignCenter size={9} color="#2f6eaa" />居中</ArrangeItem>
              <ArrangeItem><Lock size={9} color="#e6a417" fill="#e6a417" />保护<Caret /></ArrangeItem>
            </ArrangeColumn>
          </GroupBody>
          <GroupLabel>排列</GroupLabel>
        </RibbonGroup>

        <RibbonGroup $width={234}>
          <GroupBody>
            <StyleCards>
              {STYLE_CARDS.map(c => <StyleCard key={c.color} $color={c.color} $text={c.text}>Abc</StyleCard>)}
            </StyleCards>
            <StyleScroll>
              <Caret $up />
              <Caret />
              <Caret />
            </StyleScroll>
            <StyleDivider />
            <ArrangeColumn $width={34}>
              <ArrangeItem>{STRIP_ICONS[0]}填充<Caret /></ArrangeItem>
              <ArrangeItem>{STRIP_ICONS[1]}线条<Caret /></ArrangeItem>
              <ArrangeItem>{STRIP_ICONS[2]}阴影<Caret /></ArrangeItem>
            </ArrangeColumn>
          </GroupBody>
          <GroupLabel>样式<Launcher /></GroupLabel>
        </RibbonGroup>

        <RibbonGroup $width={57}>
          <GroupBody>
            <GlyphButton $width={5} />
            <ArrangeColumn $width={50}>
              <ArrangeItem><Binoculars size={9} color="#2f6eaa" fill="#2f6eaa" />查找 & 替换</ArrangeItem>
              <ArrangeItem><FileCheck size={9} color="#3a86c8" />拼写检查</ArrangeItem>
              <ArrangeItem><Replace size={9} color="#e8a13a" />替换形状<Caret /></ArrangeItem>
            </ArrangeColumn>
          </GroupBody>
          <GroupLabel>编辑</GroupLabel>
        </RibbonGroup>
      </Ribbon>

      <Workspace>
        <SymbolPanel>
          <PanelHeader>符号库<Close /></PanelHeader>
          <SearchRow>
            <svg width="9" height="9" viewBox="0 0 24 24"><rect x="1" y="1" width="10" height="10" fill="#e0553a" /><rect x="13" y="1" width="10" height="10" fill="#3a86c8" /><rect x="1" y="13" width="10" height="10" fill="#e8a13a" /><rect x="13" y="13" width="10" height="10" fill="#5bb27a" /></svg>
            <Caret />
            <SearchInput />
            <Search size={9} color="#2f7cc0" strokeWidth={3} />
          </SearchRow>
          <SectionList>
            {['常用形状', '基本绘图形状', '2D框图', '图标'].map(s => (
              <SectionRow key={s}><FolderMark />{s}<SectionClose><Close size={6} /></SectionClose></SectionRow>
            ))}
          </SectionList>
          <SymbolBody>
            <SymbolGrid>
              {SYMBOLS.map((s, i) => (
                <SymbolCell key={s.label} $selected={i === 0}>
                  <SymbolIcon>{s.icon}</SymbolIcon>
                  <SymbolLabel>{s.label}</SymbolLabel>
                </SymbolCell>
              ))}
            </SymbolGrid>
            <PanelScroll>
              <ScrollButton><Caret $up /></ScrollButton>
              <PanelThumb />
              <ScrollButton $down><Caret /></ScrollButton>
            </PanelScroll>
          </SymbolBody>
          <PanelTabs>
            <PanelTab $active>符号库</PanelTab>
            <PanelTab>文件恢复</PanelTab>
          </PanelTabs>
        </SymbolPanel>

        <CenterArea>
          <UpperArea>
            <DocArea>
              <DocTabs>
                <DocTab><EdrawLogo size={8} />绘图1<DocTabClose><Close size={6} /></DocTabClose></DocTab>
                <DocTab $active><EdrawLogo size={8} />Arrow Diagram 1<DocTabClose><Close size={6} /></DocTabClose></DocTab>
              </DocTabs>
              <DocBody>
                <MainColumn>
                  <RulerRow>
                    <RulerStart>0</RulerStart>
                    {TICKS_X.map(t => <RulerCell key={t}>{t}</RulerCell>)}
                  </RulerRow>
                  <CanvasRow>
                    <VerticalRuler>
                      {TICKS_Y.map(t => <VRulerCell key={t}>{t}</VRulerCell>)}
                    </VerticalRuler>
                    <Canvas>
                      <DiagramPage>
                        <Diagram />
                        <SlideTitle>Add Your Title Here</SlideTitle>
                        <SlideSubtitle>{'Replace your text here!   Replace your text here!'}</SlideSubtitle>
                        <FloatingToolbar />
                        <SelectedBox>
                          {LOREM.split('\n').map(l => <div key={l}><SelectedLine>{l}</SelectedLine></div>)}
                        </SelectedBox>
                        <Callout $x={606} $y={192}>{LOREM}</Callout>
                        <Callout $x={254} $y={401}>{LOREM}</Callout>
                        <Callout $x={620} $y={401}>{LOREM}</Callout>
                      </DiagramPage>
                    </Canvas>
                  </CanvasRow>
                  <HScroll>
                    <ScrollButton><Caret /></ScrollButton>
                    <HScrollThumb />
                  </HScroll>
                </MainColumn>
                <VScroll>
                  <ScrollButton><Caret $up /></ScrollButton>
                  <VScrollThumb />
                  <ScrollButton $down><Caret /></ScrollButton>
                </VScroll>
              </DocBody>
            </DocArea>

            <RightPanel>
              <PanelHeader>填充<Close /></PanelHeader>
              <RightBody>
                <ToolStrip>
                  {STRIP_ICONS.map((icon, i) => <StripItem key={i} $selected={i === 0}>{icon}</StripItem>)}
                </ToolStrip>
                <RightContent>
                  <FillOptions>
                    {FILL_OPTIONS.map((o, i) => (
                      <FillOption key={o}><Radio $checked={i === 1} />{o}</FillOption>
                    ))}
                  </FillOptions>
                  <FormRows>
                    <FormRow>
                      颜色：
                      <span />
                      <ValueBox><ColorValue /><Caret /></ValueBox>
                    </FormRow>
                    <FormRow>
                      亮度：
                      <Slider><SliderFill $value={47} /><SliderThumb $value={47} /></Slider>
                      <ValueBox>0 %<Spinner><Caret $up /><Caret /></Spinner></ValueBox>
                    </FormRow>
                    <FormRow>
                      透明度：
                      <Slider><SliderThumb $value={2} /></Slider>
                      <ValueBox>0 %<Spinner><Caret $up /><Caret /></Spinner></ValueBox>
                    </FormRow>
                  </FormRows>
                </RightContent>
              </RightBody>
            </RightPanel>
          </UpperArea>

          <PageBar>
            <ChevronUp size={9} color="#3a66cc" strokeWidth={3} />
            <PageSelect>Page-1<Caret /></PageSelect>
            <AddPage><Plus size={8} color="#2fae5f" strokeWidth={4} /></AddPage>
            <ActivePage>Page-1</ActivePage>
          </PageBar>
          <ColorBar>
            <ColorLabel>填充</ColorLabel>
            {PALETTE.map((c, i) => <Swatch key={`${c}${i}`} $color={c} />)}
          </ColorBar>
        </CenterArea>
      </Workspace>

      <StatusBar>
        <StatusInput />
        <StatusText>{'Rounded Rectangle  形状 ID：199  宽度：37.5759mm  高度：21.6346mm  角度：0deg'}</StatusText>
      </StatusBar>

      <Taskbar>
        {TASK_ICONS.map((icon, i) => <TaskItem key={i} $active={i >= 10 || i === 2}>{icon}</TaskItem>)}
        <Tray>
          CK
          <TrayDot $color="#c9302c" />
          <TrayDot $color="#1f3f9e" $round />
          <Share2 size={8} color="#eef3f8" strokeWidth={2.500} />
          <ChevronUp size={8} color="#eef3f8" strokeWidth={3} />
          <TrayDot $color="#c3d028" $round />
          <Flag size={8} color="#e35a5a" fill="#f4f4f4" strokeWidth={2.500} />
          <Monitor size={8} color="#4f5f6f" fill="#dfe8f1" strokeWidth={2.500} />
          <Volume2 size={8} color="#eef3f8" fill="#eef3f8" strokeWidth={2} />
          <Clock>21:15<br />2018/1/26</Clock>
          <ShowDesktop />
        </Tray>
      </Taskbar>

      <LangBarStack>
        <LangTip>[a]</LangTip>
        <LangBar>
          <LangIcon />中
          <Moon size={6} color="#444" fill="#444" />
          <Keyboard size={6} color="#444" />
          <User size={6} color="#444" fill="#444" />
          <Wrench size={6} color="#444" fill="#444" />
        </LangBar>
      </LangBarStack>
      <StatusGrid />

      <Watermark>
        <MarkRow>
          <MarkText $size={38}>Bai</MarkText>
          <svg width="58" height="36" viewBox="0 0 58 36" fill="rgba(255,255,255,.55)" stroke="#dddddd" strokeWidth="1.200">
            <ellipse cx="12" cy="14" rx="5" ry="7" />
            <ellipse cx="24" cy="6" rx="5" ry="6" />
            <ellipse cx="38" cy="6" rx="5" ry="6" />
            <ellipse cx="50" cy="14" rx="5" ry="7" />
            <path d="M31 14C22 14 20 22 14 27C10 32 16 36 22 35L31 33L40 35C46 36 52 32 48 27C42 22 40 14 31 14Z" />
            <text x="20" y="30" fontFamily={FONT} fontSize="16" fontWeight="bold">du</text>
          </svg>
          <MarkText $size={28}>经验</MarkText>
        </MarkRow>
        <MarkUrl>jingyan.baidu.com</MarkUrl>
      </Watermark>
    </Shell>
  )
}
